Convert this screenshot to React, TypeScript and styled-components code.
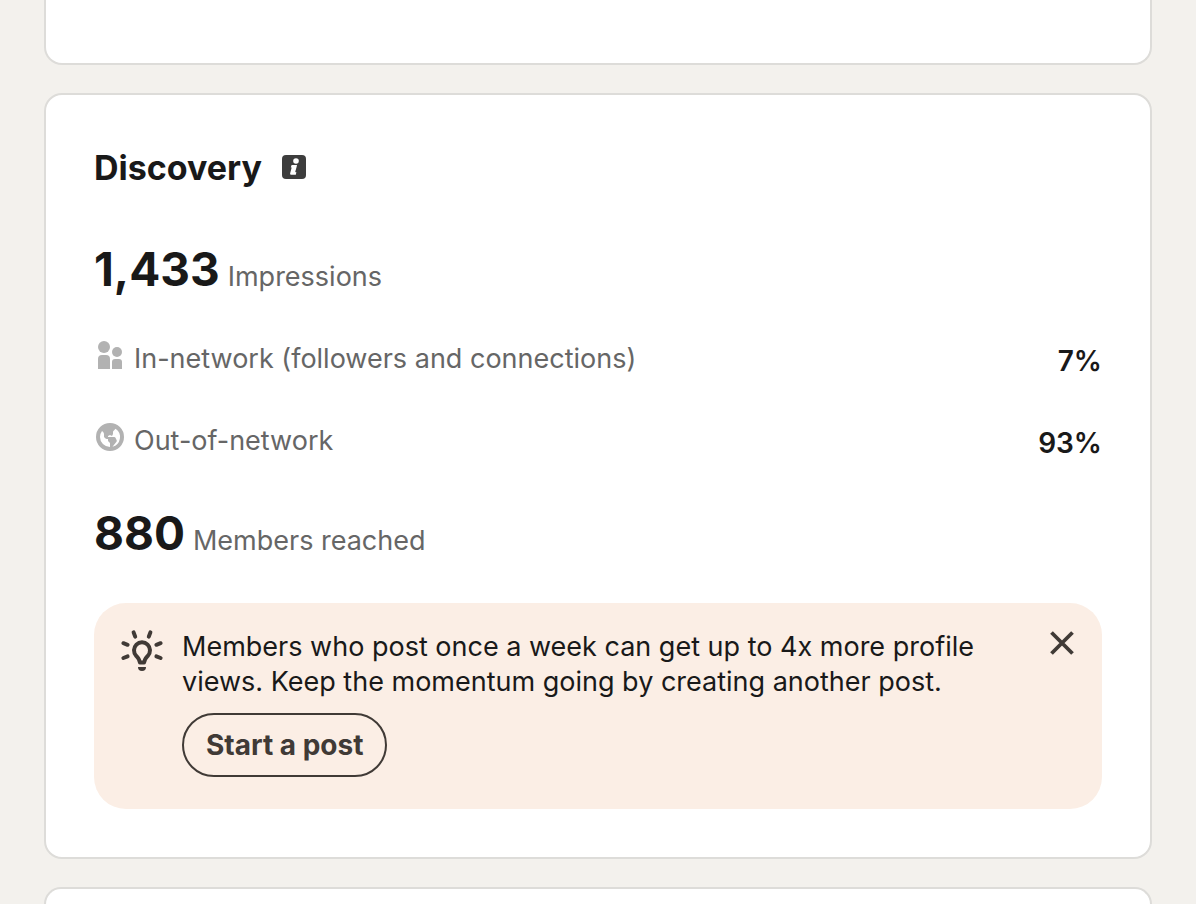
import React from "react";
import styled, { createGlobalStyle } from "styled-components";

const GlobalStyle = createGlobalStyle`
  *, *::before, *::after { box-sizing: border-box; }
  body {
    margin: 0;
    background: #f3f1ed;
    color: #191919;
    font-family: Inter, "Liberation Sans", sans-serif;
    font-size: 27px;
    line-height: 40px;
  }
`;

const Page = styled.main`
  display: flex;
  flex-direction: column;
  gap: 28px;
  min-height: 100vh;
  padding: 0 44px;
`;

const Card = styled.section<{ $edge?: "top" | "bottom" }>`
  padding: ${(p) => (p.$edge ? "0" : "48px")};
  background: #fff;
  border: 2px solid #dddcd9;
  border-radius: 18px;
  ${(p) =>
    p.$edge === "top" &&
    `min-height: 65px; border-top: 0; border-top-left-radius: 0; border-top-right-radius: 0;`}
  ${(p) =>
    p.$edge === "bottom" &&
    `flex: 1; border-bottom: 0; border-bottom-left-radius: 0; border-bottom-right-radius: 0;`}
`;

const Header = styled.header`
  display: flex;
  align-items: center;
  gap: 20px;
  margin-bottom: 46px;
`;

const Title = styled.h2`
  margin: 0;
  font-size: 34px;
  line-height: 50px;
  font-weight: 700;
`;

const InfoButton = styled.button`
  display: flex;
  padding: 0 0 2px;
  border: 0;
  background: none;
  color: #3d3d3d;
  cursor: pointer;
`;

const Stat = styled.p`
  display: flex;
  align-items: baseline;
  gap: 8px;
  margin: 0 0 40px;
  color: #666;
`;

const Figure = styled.strong`
  font-size: 46px;
  line-height: 60px;
  font-weight: 700;
  color: #191919;
`;

const Breakdown = styled.ul`
  display: grid;
  gap: 42px;
  margin: 0 0 42px;
  padding: 0;
  list-style: none;
`;

const Row = styled.li`
  display: flex;
  justify-content: space-between;
  height: 40px;
`;

const RowLabel = styled.span`
  display: flex;
  align-items: flex-start;
  gap: 8px;
  color: #666;

  svg {
    flex: none;
    color: #b2b2b2;
  }
`;

const RowValue = styled.span`
  align-self: flex-end;
  font-size: 28px;
  line-height: 36px;
  font-weight: 600;
`;

const Tip = styled.aside`
  display: flex;
  align-items: flex-start;
  gap: 16px;
  padding: 16px 16px 32px 24px;
  border-radius: 32px;
  background: #fbeee5;
`;

const TipIcon = styled.span`
  display: flex;
  flex: none;
  padding-top: 8px;
  color: #403a36;
`;

const TipBody = styled.div`
  flex: 1;
  padding-top: 10px;
`;

const TipText = styled.p`
  margin: 0 0 14px;
  line-height: 35px;
`;

const PostButton = styled.button`
  display: block;
  height: 64px;
  padding: 0 22px;
  border: 2px solid #403a36;
  border-radius: 32px;
  background: none;
  color: #403a36;
  font: inherit;
  font-size: 28px;
  font-weight: 700;
  cursor: pointer;
`;

const CloseButton = styled.button`
  display: flex;
  padding: 0;
  border: 0;
  background: none;
  color: #403a36;
  cursor: pointer;
`;

const InfoIcon = () => (
  <svg width="24" height="24" viewBox="0 0 24 24" aria-hidden="true">
    <rect width="24" height="24" rx="4" fill="currentColor" />
    <circle cx="14" cy="6" r="2.8" fill="#fff" />
    <path
      d="M9.600 10h5.400l-.4 2-1.300 4.600c-.1.5.1.6.5.6h.6l-.6 2.600H9.400c-1.100 0-1.500-.8-1.200-1.800l1.500-5.600h-.9z"
      fill="#fff"
    />
  </svg>
);

const PeopleIcon = () => (
  <svg width="32" height="32" viewBox="0 0 32 32" fill="currentColor" aria-hidden="true">
    <circle cx="10" cy="8" r="6" />
    <path d="M4 20a4 4 0 0 1 4-4h4a4 4 0 0 1 4 4v10H4z" />
    <circle cx="23" cy="13" r="5" />
    <path d="M18 23a3 3 0 0 1 3-3h4a3 3 0 0 1 3 3v7H18z" />
  </svg>
);

const GlobeIcon = () => (
  <svg width="32" height="32" viewBox="0 0 16 16" fill="currentColor" aria-hidden="true">
    <path
      fillRule="evenodd"
      d="M8 1a7 7 0 1 0 7 7 7 7 0 0 0-7-7zM3 8a5 5 0 0 1 1-3l.55.55A1.5 1.5 0 0 1 5 6.62v1.07a.75.75 0 0 0 .22.53l.56.56a.75.75 0 0 0 .53.22H7v.69a.75.75 0 0 0 .22.53l.56.56a.75.75 0 0 1 .22.53V13a5 5 0 0 1-5-5zm6.24 4.83l2-2.46a.75.75 0 0 0 .09-.8l-.58-1.16A.76.76 0 0 0 10 8H7v-.19a.51.51 0 0 1 .28-.45l.38-.19a.74.74 0 0 1 .68 0L9 7.5l.38-.7a1 1 0 0 0 .12-.48v-.85a.78.78 0 0 1 .21-.53l1.07-1.09a5 5 0 0 1-1.54 9z"
    />
  </svg>
);

const BulbIcon = () => (
  <svg
    width="48"
    height="48"
    viewBox="0 0 48 48"
    fill="none"
    stroke="currentColor"
    strokeWidth="4"
    strokeLinecap="round"
    aria-hidden="true"
  >
    <path d="M15.6 5.4l1.6 4.2M32.4 5.4l-1.6 4.2M5.4 16.2l4.2 1.6M42.6 16.2l-4.2 1.6M5.4 31l4.2-1.6M42.6 31l-4.2-1.6" />
    <path
      strokeLinejoin="round"
      strokeLinecap="butt"
      d="M22 35.6l-1-3c-.6-1.600-1.600-2.500-2.800-3.800A8 8 0 1 1 29.800 28.800c-1.200 1.300-2.200 2.200-2.800 3.800l-1 3z"
    />
    <path stroke="none" fill="currentColor" d="M20 40h8a4 4 0 0 1-8 0z" />
  </svg>
);

const CloseIcon = () => (
  <svg
    width="48"
    height="48"
    viewBox="0 0 48 48"
    stroke="currentColor"
    strokeWidth="3.8"
    aria-hidden="true"
  >
    <path d="M13.500 13.500l21 21M34.500 13.500l-21 21" />
  </svg>
);

const sources = [
  { label: "In-network (followers and connections)", value: "7%", Icon: PeopleIcon },
  { label: "Out-of-network", value: "93%", Icon: GlobeIcon },
];

export default function App() {
  return (
    <>
      <GlobalStyle />
      <Page>
        <Card $edge="top" />
        <Card>
          <Header>
            <Title>Discovery</Title>
            <InfoButton type="button" aria-label="About discovery">
              <InfoIcon />
            </InfoButton>
          </Header>
          <Stat>
            <Figure>1,433</Figure>
            <span>Impressions</span>
          </Stat>
          <Breakdown>
            {sources.map(({ label, value, Icon }) => (
              <Row key={label}>
                <RowLabel>
                  <Icon />
                  {label}
                </RowLabel>
                <RowValue>{value}</RowValue>
              </Row>
            ))}
          </Breakdown>
          <Stat>
            <Figure>880</Figure>
            <span>Members reached</span>
          </Stat>
          <Tip>
            <TipIcon>
              <BulbIcon />
            </TipIcon>
            <TipBody>
              <TipText>
                Members who post once a week can get up to 4x more profile views. Keep the
                momentum going by creating another post.
              </TipText>
              <PostButton type="button">Start a post</PostButton>
            </TipBody>
            <CloseButton type="button" aria-label="Dismiss">
              <CloseIcon />
            </CloseButton>
          </Tip>
        </Card>
        <Card $edge="bottom" />
      </Page>
    </>
  );
}
